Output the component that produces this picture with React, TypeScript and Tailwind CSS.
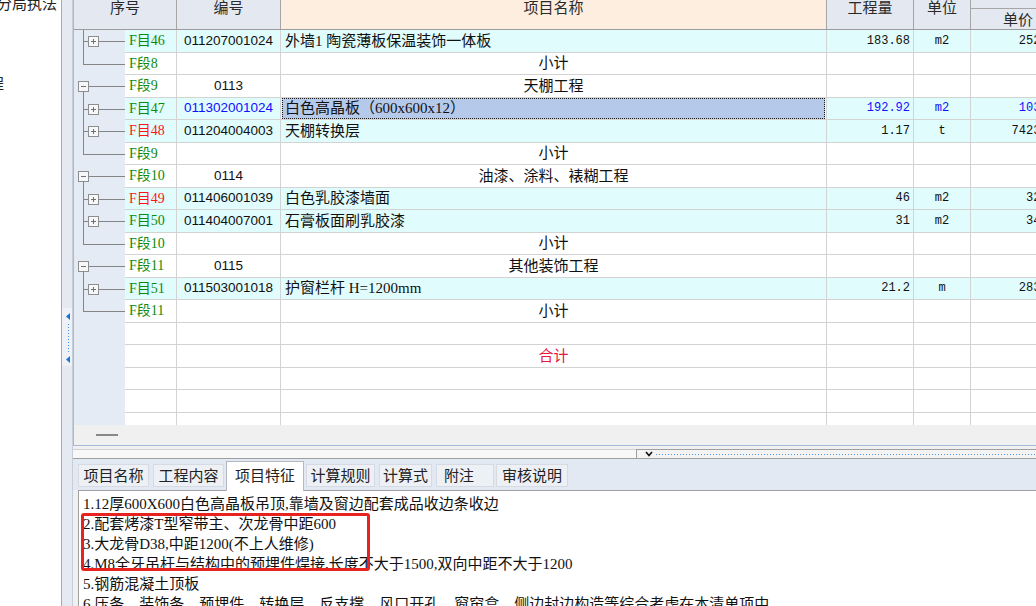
import React from "react";

type Kind = "item" | "section" | "subtotal" | "blank" | "total";

type Row = {
  kind: Kind;
  seq?: string;
  red?: boolean;
  code?: string;
  name?: string;
  qty?: string;
  unit?: string;
  price?: string;
  blue?: boolean;
  selected?: boolean;
};

const cjkSans = 'font-[family-name:"Noto_Sans_CJK_SC",sans-serif]';
const cjkSerif = 'font-[family-name:"Liberation_Serif","Noto_Sans_CJK_SC",serif]';
const mono = 'font-[family-name:"Liberation_Mono","Noto_Sans_CJK_SC",monospace]';
const sans = 'font-[family-name:"Liberation_Sans","Noto_Sans_CJK_SC",sans-serif]';

const rows: Row[] = [
  { kind: "item", seq: "F目46", code: "011207001024", name: "外墙1 陶瓷薄板保温装饰一体板", qty: "183.68", unit: "m2", price: "252.36" },
  { kind: "subtotal", seq: "F段8", name: "小计" },
  { kind: "section", seq: "F段9", code: "0113", name: "天棚工程" },
  { kind: "item", seq: "F目47", code: "011302001024", name: "白色高晶板（600x600x12）", qty: "192.92", unit: "m2", price: "103.58", blue: true, selected: true },
  { kind: "item", seq: "F目48", red: true, code: "011204004003", name: "天棚转换层", qty: "1.17", unit: "t", price: "7423.16" },
  { kind: "subtotal", seq: "F段9", name: "小计" },
  { kind: "section", seq: "F段10", code: "0114", name: "油漆、涂料、裱糊工程" },
  { kind: "item", seq: "F目49", red: true, code: "011406001039", name: "白色乳胶漆墙面", qty: "46", unit: "m2", price: "32.85" },
  { kind: "item", seq: "F目50", code: "011404007001", name: "石膏板面刷乳胶漆", qty: "31", unit: "m2", price: "34.12" },
  { kind: "subtotal", seq: "F段10", name: "小计" },
  { kind: "section", seq: "F段11", code: "0115", name: "其他装饰工程" },
  { kind: "item", seq: "F目51", code: "011503001018", name: "护窗栏杆 H=1200mm", qty: "21.2", unit: "m", price: "283.40" },
  { kind: "subtotal", seq: "F段11", name: "小计" },
  { kind: "blank" },
  { kind: "total", name: "合计" },
  { kind: "blank" },
  { kind: "blank" },
  { kind: "blank" },
];

const lines = [
  "1.12厚600X600白色高晶板吊顶,靠墙及窗边配套成品收边条收边",
  "2.配套烤漆T型窄带主、次龙骨中距600",
  "3.大龙骨D38,中距1200(不上人维修)",
  "4.M8全牙吊杆与结构中的预埋件焊接,长度不大于1500,双向中距不大于1200",
  "5.钢筋混凝土顶板",
  "6.压条、装饰条、预埋件、转换层、反支撑、风口开孔、窗帘盒、侧边封边构造等综合考虑在本清单项中",
];

// tree connector drawn in the left gutter of each row
function Tree({ kind }: { kind: Kind }) {
  if (kind !== "item" && kind !== "section" && kind !== "subtotal") return null;
  const c = 11.5;
  return (
    <svg width="51" height="22.5" viewBox="0 0 51 22.5" shapeRendering="crispEdges" className="block">
      {kind === "item" && (
        <>
          <line x1="9.5" y1="0" x2="9.5" y2="22.5" stroke="#858585" />
          <line x1="9.5" y1={c} x2="14" y2={c} stroke="#858585" />
          <rect x="14.5" y="6.5" width="10" height="10" fill="#f6f7f9" stroke="#8e8e8e" />
          <line x1="17" y1={c} x2="22" y2={c} stroke="#707070" />
          <line x1="19.5" y1="9" x2="19.5" y2="14" stroke="#707070" />
          <line x1="25" y1={c} x2="51" y2={c} stroke="#858585" />
        </>
      )}
      {kind === "section" && (
        <>
          <rect x="4.5" y="6.5" width="10" height="10" fill="#f6f7f9" stroke="#8e8e8e" />
          <line x1="7" y1={c} x2="12" y2={c} stroke="#707070" />
          <line x1="15" y1={c} x2="51" y2={c} stroke="#858585" />
          <line x1="9.5" y1="17" x2="9.5" y2="22.5" stroke="#858585" />
        </>
      )}
      {kind === "subtotal" && (
        <>
          <line x1="9.5" y1="0" x2="9.5" y2={c} stroke="#858585" />
          <line x1="9.5" y1={c} x2="51" y2={c} stroke="#858585" />
        </>
      )}
    </svg>
  );
}

function GridRow({ r }: { r: Row }) {
  const bg = r.kind === "item" ? "bg-[#e1fcfc]" : "bg-white";
  const cell = `flex h-full shrink-0 items-center border-r border-b border-[#d3d3d3] ${bg}`;
  const ink = r.blue ? "text-[#1010ff]" : "text-[#111]";
  const centered = r.kind !== "item";
  return (
    <div className="flex h-[22.5px] shrink-0">
      <div className="h-full w-[51px] shrink-0 bg-[#e4ebf4]">
        <Tree kind={r.kind} />
      </div>
      <div className={`${cell} w-[52px] pl-[4px] text-[14px] ${cjkSerif} ${r.red ? "text-[#ff1414]" : "text-[#0c8a0c]"}`}>
        {r.seq}
      </div>
      <div className={`${cell} w-[104px] justify-center text-[13.5px] ${sans} ${ink}`}>{r.code}</div>
      <div
        className={`${cell} relative w-[546px] text-[15px] ${cjkSerif} ${
          centered ? "justify-center" : "pl-[4px]"
        } ${r.kind === "total" ? "text-[#e8173c]" : "text-[#111]"}`}
      >
        {r.selected && (
          <div className="absolute inset-x-[1px] inset-y-0 border border-dotted border-[#1a1a1a] bg-[#b5c9ea]" />
        )}
        <span className="relative whitespace-nowrap">{r.name}</span>
      </div>
      <div className={`${cell} w-[87px] justify-end pr-[3px] text-[12px] ${mono} ${ink}`}>{r.qty}</div>
      <div className={`${cell} w-[57px] justify-center text-[12px] ${mono} ${ink}`}>{r.unit}</div>
      <div className={`${cell} w-[95px] justify-end pr-[3px] text-[12px] ${mono} ${ink}`}>{r.price}</div>
    </div>
  );
}

function Header() {
  return (
    <div className={`flex h-[30px] shrink-0 border-b border-[#9c9c9c] bg-[#e4e9f1] text-[15px] leading-[14px] text-[#2a2a2a] ${cjkSans}`}>
      <div className="flex w-[103px] shrink-0 justify-center border-r border-[#a6a6a6]">序号</div>
      <div className="flex w-[104px] shrink-0 justify-center border-r border-[#a6a6a6]">编号</div>
      <div className="flex w-[546px] shrink-0 justify-center border-r border-[#a6a6a6] bg-[#fdeedf]">项目名称</div>
      <div className="flex w-[87px] shrink-0 justify-center border-r border-[#a6a6a6]">工程量</div>
      <div className="flex w-[57px] shrink-0 justify-center border-r border-[#a6a6a6]">单位</div>
      <div className="flex w-[95px] shrink-0 flex-col border-r border-[#a6a6a6]">
        <div className="h-[9px] border-b border-[#a6a6a6]" />
        <div className="flex flex-1 items-center justify-center">单价</div>
      </div>
    </div>
  );
}

const tabs = [
  { label: "项目名称", cls: "w-[71px]" },
  { label: "工程内容", cls: "ml-[4px] w-[71px]" },
  { label: "项目特征", cls: "ml-[2px] w-[78px]", active: true },
  { label: "计算规则", cls: "ml-[2px] w-[69px]" },
  { label: "计算式", cls: "ml-[4px] w-[53px]" },
  { label: "附注", cls: "ml-[4px] w-[58px] justify-start pl-[7px]" },
  { label: "审核说明", cls: "ml-[2px] w-[72px]" },
];

export default function App() {
  return (
    <div className={`flex h-[606px] w-[1036px] overflow-hidden bg-white ${cjkSans}`}>
      {/* left tree panel, mostly cut off */}
      <div className="w-[62px] shrink-0 overflow-hidden border-r border-[#a9a9a9] bg-white text-[15px] leading-[20px] text-[#222]">
        <div className="-mt-[7px] -ml-[3px] whitespace-nowrap">分局执法</div>
        <div className="mt-[60px] -ml-[11px] whitespace-nowrap">程</div>
      </div>

      {/* collapse strip */}
      <div className="flex w-[10px] shrink-0 flex-col bg-[#e5eaf2]">
        <div className="mt-[308px] h-[58px] bg-[#eef2f7]">
          <svg width="10" height="58" viewBox="0 0 10 58" className="block">
            <polygon points="8,5 4,8.5 8,12" fill="#1d72d6" />
            {[16, 19, 22, 25, 28, 31, 34, 37, 40, 43].map((y) => (
              <rect key={y} x="6" y={y} width="1" height="1" fill="#3f8fe4" />
            ))}
            <polygon points="8,48 4,51.5 8,55" fill="#1d72d6" />
          </svg>
        </div>
      </div>

      <div className="flex min-w-0 flex-1 flex-col border-l border-[#c6ced9] bg-[#f0f0f0]">
        {/* grid */}
        <div className="flex h-[446px] shrink-0 flex-col overflow-hidden border-b border-l border-[#a3b9d6] bg-white">
          <Header />
          <div className="flex h-[395px] flex-col overflow-hidden">
            {rows.map((r, i) => (
              <GridRow key={i} r={r} />
            ))}
          </div>
          <div className="flex h-[20px] shrink-0 items-center bg-[#f0f0f0] pl-[22px]">
            <div className="h-[2px] w-[22px] bg-[#888]" />
          </div>
        </div>

        {/* splitter */}
        <div className="flex h-[13px] shrink-0 flex-col pt-[3px]">
          <div className="flex h-[10px] border-b border-[#a0a0a0]">
            <div className="w-[563px] shrink-0 border-t border-[#d2d2d2] bg-[#f8f8f8]" />
            <div className="flex min-w-0 flex-1 items-center border-t border-l border-[#a0a0a0] bg-[#f4f4f4] pl-[8px]">
              <svg width="8" height="6" viewBox="0 0 8 6" className="shrink-0">
                <polyline points="1,1 4,4.5 7,1" fill="none" stroke="#111" strokeWidth="1.6" />
              </svg>
              <svg height="2" className="ml-[3px] w-full" shapeRendering="crispEdges">
                <line x1="0" y1="1" x2="100%" y2="1" stroke="#4a93e4" strokeDasharray="1 2" />
              </svg>
            </div>
          </div>
        </div>

        {/* tabs */}
        <div className="flex h-[31px] shrink-0 items-end bg-[#e3e9f3] pl-[5px] text-[15px] text-[#222]">
          {tabs.map((t) =>
            t.active ? (
              <div
                key={t.label}
                className={`relative z-10 -mb-px flex h-[30px] shrink-0 items-center justify-center border border-b-0 border-[#b4b8c0] bg-white pb-[3px] ${t.cls}`}
              >
                {t.label}
              </div>
            ) : (
              <div
                key={t.label}
                className={`mb-[3px] flex h-[23px] shrink-0 items-center justify-center border border-[#d6dae2] bg-[#edf0f5] ${t.cls}`}
              >
                {t.label}
              </div>
            )
          )}
        </div>

        {/* feature text */}
        <div
          className={`relative ml-[5px] min-h-0 flex-1 overflow-hidden border-t border-l border-[#a0a0a0] bg-white pt-[3px] pl-[4px] text-[15px] leading-[20px] text-[#111] ${cjkSerif}`}
        >
          {lines.map((l) => (
            <div key={l} className="whitespace-nowrap">
              {l}
            </div>
          ))}
          <div className="absolute top-[22px] left-[2px] h-[58px] w-[289px] rounded-[3px] border-[3px] border-[#e8231f]" />
        </div>
      </div>
    </div>
  );
}
